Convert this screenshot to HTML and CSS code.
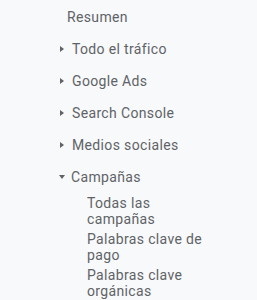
FILE: index.html
```html
<!DOCTYPE html>
<html lang="es">
<head>
  <meta charset="utf-8" />
  <title>Adquisición</title>
  <link rel="stylesheet" href="styles.css">
</head>
<body>
<nav class="ga-nav">
  <div class="ga-item ga-item--plain">Resumen</div>
  <div class="ga-item"><span class="ga-arrow ga-arrow--right"></span>Todo el tráfico</div>
  <div class="ga-item"><span class="ga-arrow ga-arrow--right"></span>Google Ads</div>
  <div class="ga-item"><span class="ga-arrow ga-arrow--right"></span>Search Console</div>
  <div class="ga-item"><span class="ga-arrow ga-arrow--right"></span>Medios sociales</div>
  <div class="ga-item"><span class="ga-arrow ga-arrow--down"></span>Campañas</div>
  <div class="ga-sub">
    <a class="ga-sub-link" href="#">Todas las campañas</a>
    <a class="ga-sub-link" href="#">Palabras clave de pago</a>
    <a class="ga-sub-link" href="#">Palabras clave orgánicas</a>
  </div>
</nav>
</body>
</html>
```
FILE: styles.css
```css
:root {
  --fondo: #f8f9fa;
  --texto: #5f6368;
}
html, body {
  margin: 0;
  padding: 0;
  background-color: var(--fondo);
  height: 100%;
}
.ga-nav {
  font-family: Roboto, "Noto Sans", sans-serif;
  font-size: 14px;
  letter-spacing: 0.35px;
  color: var(--texto);
  padding: 1px 0 0 59px;
}
.ga-item {
  display: flex;
  align-items: center;
  height: 32px;
  white-space: nowrap;
}
.ga-item--plain {
  padding-left: 8px;
}
.ga-arrow {
  width: 0;
  height: 0;
  border-style: solid;
  border-color: transparent;
}
.ga-arrow--right {
  border-width: 3.5px 0 3.5px 4px;
  border-left-color: var(--texto);
  margin: 0 8px 0 1px;
}
.ga-arrow--down {
  border-width: 4px 3.5px 0 3.5px;
  border-top-color: var(--texto);
  margin: 0 6px 0 0;
}
.ga-sub {
  display: flex;
  flex-direction: column;
  gap: 4px;
  width: 122px;
  margin: 2px 0 0 28px;
}
.ga-sub-link {
  color: var(--texto);
  text-decoration: none;
  line-height: 16px;
}
```
